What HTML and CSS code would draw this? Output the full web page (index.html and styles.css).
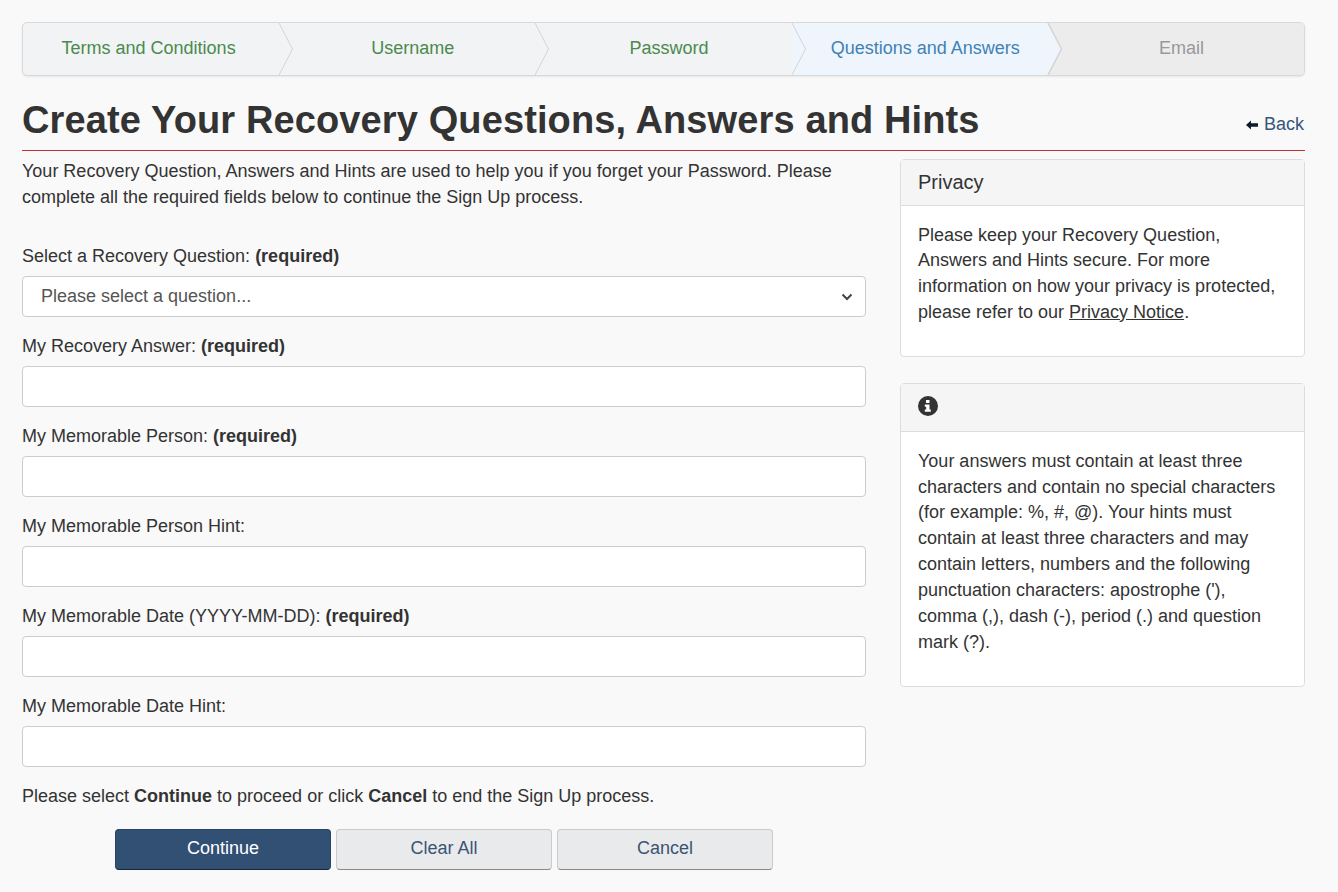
FILE: index.html
```html
<!DOCTYPE html>
<html lang="en">
<head>
<meta charset="utf-8">
<title>Create Your Recovery Questions</title>
<link rel="stylesheet" href="styles.css">
</head>
<body>
<main class="page">
  <ol class="steps">
    <li class="step first done">Terms and Conditions<svg class="chev" viewBox="0 0 16 52" aria-hidden="true"><path d="M1 0 L14.500 26 L1 52" /></svg></li>
    <li class="step done">Username<svg class="chev" viewBox="0 0 16 52" aria-hidden="true"><path d="M1 0 L14.500 26 L1 52" /></svg></li>
    <li class="step done">Password<svg class="chev" viewBox="0 0 16 52" aria-hidden="true"><path d="M1 0 L14.500 26 L1 52" /></svg></li>
    <li class="step current">Questions and Answers<svg class="chev" viewBox="0 0 16 52" aria-hidden="true"><path class="fill" d="M0 0 L1 0 L14.500 26 L1 52 L0 52 Z" /><path d="M1 0 L14.500 26 L1 52" /></svg></li>
    <li class="step todo">Email</li>
  </ol>
  <header class="title-row">
    <h1>Create Your Recovery Questions, Answers and Hints</h1>
    <a class="back" href="#"><svg class="back-icon" viewBox="0 0 12 10" aria-hidden="true"><path d="M0 5 L5 .5 V3.300 H12 V6.700 H5 V9.500 Z"/></svg>Back</a>
  </header>
  <div class="columns">
    <form class="form">
      <p class="intro">Your Recovery Question, Answers and Hints are used to help you if you forget your Password. Please complete all the required fields below to continue the Sign Up process.</p>
      <div class="field">
        <label>Select a Recovery Question: <b>(required)</b></label>
        <div class="select">Please select a question...<svg class="caret" viewBox="0 0 12 8" aria-hidden="true"><path d="M1.500 1.500 L6 6 L10.500 1.500"/></svg></div>
      </div>
      <div class="field"><label>My Recovery Answer: <b>(required)</b></label><input type="text"></div>
      <div class="field"><label>My Memorable Person: <b>(required)</b></label><input type="text"></div>
      <div class="field"><label>My Memorable Person Hint:</label><input type="text"></div>
      <div class="field"><label>My Memorable Date (YYYY-MM-DD): <b>(required)</b></label><input type="text"></div>
      <div class="field"><label>My Memorable Date Hint:</label><input type="text"></div>
      <p class="note">Please select <b>Continue</b> to proceed or click <b>Cancel</b> to end the Sign Up process.</p>
      <div class="buttons">
        <button type="button" class="btn primary">Continue</button>
        <button type="button" class="btn">Clear All</button>
        <button type="button" class="btn">Cancel</button>
      </div>
    </form>
    <aside class="side">
      <section class="panel">
        <h2 class="panel-head">Privacy</h2>
        <p class="panel-body privacy">Please keep your Recovery Question, Answers and Hints secure. For more information on how your privacy is protected, please refer to our <a href="#">Privacy Notice</a>.</p>
      </section>
      <section class="panel">
        <div class="panel-head icon-head"><svg class="info" viewBox="0 0 20 20" aria-hidden="true"><circle cx="10" cy="10" r="10"/><path class="info-i" d="M8 4h3.500v3H8z M6.800 8.500h4.700v5h1.300v2.300H6.800v-2.300h1.400v-2.700H6.800z"/></svg></div>
        <p class="panel-body hints">Your answers must contain at least three characters and contain no special characters (for example: %, #, @). Your hints must contain at least three characters and may contain letters, numbers and the following punctuation characters: apostrophe ('), comma (,), dash (-), period (.) and question mark (?).</p>
      </section>
    </aside>
  </div>
</main>
</body>
</html>
```

FILE: styles.css
```css
* { box-sizing: border-box; }
html, body { margin: 0; padding: 0; }
body {
  background: #f9f9f9;
  color: #333;
  font-family: "Liberation Sans", Arial, sans-serif;
  font-size: 18px;
  line-height: 25.714px;
}
.page { padding: 22px 33px 0 22px; }

.steps {
  display: grid;
  grid-template-columns: repeat(5, 1fr);
  list-style: none;
  margin: 0;
  padding: 0;
  height: 54px;
  border: 1px solid #d9d9d9;
  border-radius: 5px;
  background: #f2f3f5;
  box-shadow: 0 1px 2px rgba(0,0,0,.08);
  overflow: hidden;
}
.step {
  position: relative;
  display: flex;
  align-items: center;
  justify-content: center;
  padding-left: 11px;
  height: 52px;
  padding-bottom: 1px;
}
.step.first { padding-left: 0; padding-right: 5px; }
.done { color: #4a8a4e; }
.current { color: #3f82b5; background: #eff5fd; }
.todo { color: #999; background: #ececec; }
.chev {
  position: absolute;
  right: -15px;
  top: 0;
  width: 16px;
  height: 52px;
  z-index: 1;
  fill: none;
  stroke: #d4d4d4;
  stroke-width: 1;
}
.chev .fill { fill: #eff5fd; stroke: none; }
.current .chev { stroke-width: 1.5; }

.title-row {
  display: flex;
  justify-content: space-between;
  align-items: flex-end;
  height: 75px;
  border-bottom: 1px solid #c0313b;
  padding-bottom: 8px;
}
h1 {
  margin: 0;
  font-size: 38px;
  line-height: 44px;
  font-weight: 700;
  letter-spacing: .12px;
}
.back {
  color: #36557a;
  text-decoration: none;
  display: flex;
  align-items: center;
  gap: 6px;
  margin-right: 1px;
  margin-bottom: 4px;
}
.back-icon { width: 12px; height: 10px; fill: #0d1b2e; }

.columns {
  display: grid;
  grid-template-columns: 844px 405px;
  gap: 34px;
}
.form { padding-top: 8px; }
.intro { margin: 0 0 27px; }
.field { height: 90px; padding-top: 7px; }
.field label { display: block; height: 32px; }
.field input, .select {
  display: block;
  width: 100%;
  height: 41px;
  border: 1px solid #ccc;
  border-radius: 4px;
  background: #fff;
  font: inherit;
}
.select {
  display: flex;
  align-items: center;
  justify-content: space-between;
  padding: 0 12px 0 18px;
  color: #555;
}
.caret { width: 12px; height: 8px; fill: none; stroke: #444; stroke-width: 2; }
.note { margin: 7px 0 19px; }
.buttons { display: flex; gap: 5px; padding-left: 93px; }
.btn {
  width: 216px;
  height: 41px;
  border: 1px solid #c9cacc;
  border-bottom-color: #888;
  border-radius: 4px;
  background: #e9eaec;
  color: #3b5472;
  font: inherit;
  padding: 0 0 2px;
}
.btn.primary {
  background: #325074;
  border-color: #2a4465;
  border-bottom-color: #14263c;
  color: #fff;
}

.side { padding-top: 8px; display: flex; flex-direction: column; gap: 26px; }
.panel {
  background: #fff;
  border: 1px solid #ddd;
  border-radius: 4px;
}
.panel-head {
  margin: 0;
  background: #f5f5f5;
  border-bottom: 1px solid #ddd;
  padding: 0 17px;
  height: 46px;
  display: flex;
  align-items: center;
  font-size: 20px;
  font-weight: 400;
}
.icon-head { height: 48px; padding-bottom: 4px; }
.info { width: 20px; height: 20px; fill: #333; }
.info-i { fill: #fff; }
.panel-body { margin: 0; padding: 17px 17px 16px; }
.privacy { height: 150px; padding-top: 16.7px; }
.hints { height: 254px; padding-top: 16.8px; line-height: 25.85px; }
.privacy a { color: #333; }
```
